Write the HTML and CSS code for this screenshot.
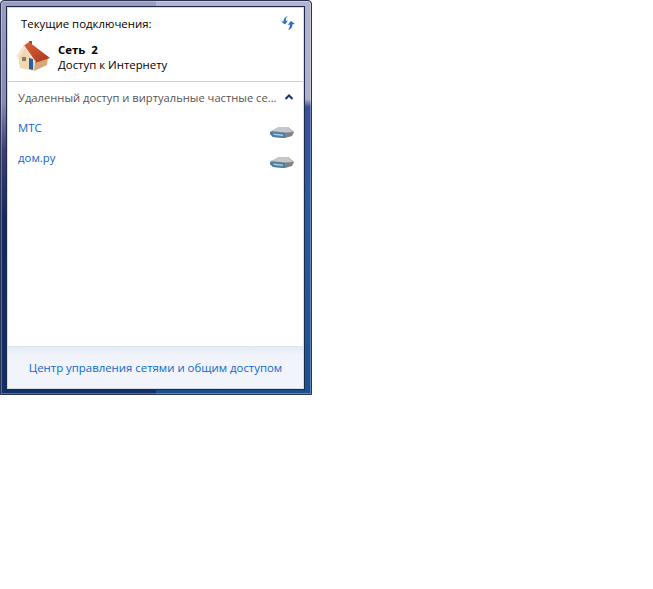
FILE: index.html
```html
<!DOCTYPE html>
<html lang="ru">
<head>
    <meta charset="UTF-8">
    <title>Текущие подключения</title>
    <link rel="stylesheet" href="styles.css">
</head>
<body>
    <div class="flyout">
        <div class="panel">
            <div class="content">
                <section class="current">
                    <div class="current-head">
                        <span>Текущие подключения:</span>
                        <svg class="refresh" width="16" height="16" viewBox="0 0 16 16">
                            <path d="M8 1 C6 2 5.500 4 6 6 L8 5.500 L5 9.500 L1 6.500 L3.500 6.500 C3.500 4 5 1.500 8 1 Z" fill="#2a6fc0"/>
                            <path d="M8 15 C9.500 13.500 10 11 9.800 9.500 L7.500 10 L11 6 L15 9 L12.500 9.300 C12.500 12 11 14.500 8 15 Z" fill="#2a6fc0"/>
                        </svg>
                    </div>
                    <div class="network">
                        <svg class="house" width="36" height="31" viewBox="6 6 36 31">
                            <defs>
                                <linearGradient id="roof" x1="0" y1="0" x2="1" y2="1">
                                    <stop offset="0" stop-color="#dd6238"/>
                                    <stop offset="1" stop-color="#a5371e"/>
                                </linearGradient>
                            </defs>
                            <path d="M16 12 L9 21 L11 33 L25 36 L26 26 Z" fill="#f0d8b0"/>
                            <path d="M26 26 L39 23 L38 30 L25 36 Z" fill="#d4a878"/>
                            <rect x="20" y="6" width="3" height="4" fill="#a05030"/>
                            <path d="M20 7 L41 23 L26 28 L14 11 Z" fill="url(#roof)"/>
                            <path d="M15 10 L7 21 L9 23 L16 14 L25 28 L27 27 Z" fill="#f6e8d0"/>
                            <path d="M20 23 L24 24 L24 35 L20 34 Z" fill="#2a5ca8"/>
                            <rect x="13" y="22" width="4" height="4" fill="#8a7a60"/>
                        </svg>
                        <div class="network-text">
                            <strong>Сеть&nbsp; 2</strong>
                            <span>Доступ к Интернету</span>
                        </div>
                    </div>
                </section>
                <section class="vpn">
                    <div class="vpn-head">
                        <span>Удаленный доступ и виртуальные частные се...</span>
                        <svg class="chevron" width="8" height="6" viewBox="0 0 8 6">
                            <path d="M0.500 5 L4 1.500 L7.500 5" fill="none" stroke="#14356e" stroke-width="2"/>
                        </svg>
                    </div>
                    <div class="vpn-list">
                        <div class="vpn-row">
                            <a class="vpn-link">МТС</a>
                            <svg class="modem" width="24" height="12" viewBox="0 0 24 12">
                                <path d="M0 6 L9 1 L18 1 L24 6 L22 10 L15 12 L3 11 L0 8 Z" fill="#7d8286"/>
                                <path d="M1 5 L9 1 L18 1 L23 6 L15 6.500 Z" fill="#c4c8cc"/>
                                <path d="M0 6 L15 7 L15 12 L3 11 L0 8 Z" fill="#4a7fa4"/>
                                <path d="M3 7.500 L13 8.500 L13 10 L4 9 Z" fill="#a9d0e4"/>
                            </svg>
                        </div>
                        <div class="vpn-row">
                            <a class="vpn-link">дом.ру</a>
                            <svg class="modem" width="24" height="12" viewBox="0 0 24 12">
                                <path d="M0 6 L9 1 L18 1 L24 6 L22 10 L15 12 L3 11 L0 8 Z" fill="#7d8286"/>
                                <path d="M1 5 L9 1 L18 1 L23 6 L15 6.500 Z" fill="#c4c8cc"/>
                                <path d="M0 6 L15 7 L15 12 L3 11 L0 8 Z" fill="#4a7fa4"/>
                                <path d="M3 7.500 L13 8.500 L13 10 L4 9 Z" fill="#a9d0e4"/>
                            </svg>
                        </div>
                    </div>
                </section>
            </div>
            <div class="footer">
                <a class="footer-link">Центр управления сетями и общим доступом</a>
            </div>
        </div>
    </div>
</body>
</html>
```

FILE: styles.css
```css
html, body {
    margin: 0;
    background: #ffffff;
}

body {
    font-family: "Open Sans", "Noto Sans", sans-serif;
    font-size: 11.4px;
    color: #000000;
}

/* Window frame */
.flyout {
    box-sizing: border-box;
    width: 312px;
    height: 395px;
    padding: 6px 7px 5px 6px;
    border: 1px solid #2a3454;
    border-radius: 4px 4px 0 0;
    box-shadow: inset 0 0 0 1px rgba(255, 255, 255, 0.3);
    background-color: #14306a;
    background-image:
        linear-gradient(to bottom, #9c9cbc 0, #8a8ab0 100px, #3c3c74 150px, #12285e 220px, #12306a 100%),
        linear-gradient(to bottom, #b4b4cc 0, #b0b0cc 98px, #3c4f98 106px, #2a5aa0 200px, #1a5090 100%);
    background-size: 50% 100%, 50% 100%;
    background-position: left top, right top;
    background-repeat: no-repeat;
}

.panel {
    box-sizing: border-box;
    display: flex;
    flex-direction: column;
    height: 100%;
    border: 1px solid #d4dcea;
    outline: 1px solid #1c2a4a;
    background: #ffffff;
}

.content {
    flex: 1;
}

/* Current connection */
.current {
    height: 73px;
    border-bottom: 1px solid #cfcfcf;
}

.current-head {
    display: flex;
    justify-content: space-between;
    padding: 7px 7px 0 13px;
    height: 22px;
    line-height: 18px;
}

.network {
    display: flex;
    align-items: center;
    gap: 7px;
    padding: 4px 0 0 7px;
}

.network-text {
    display: flex;
    flex-direction: column;
    line-height: 15px;
}

.network-text strong {
    font-weight: 700;
}

/* VPN list */
.vpn-head {
    display: flex;
    align-items: center;
    justify-content: space-between;
    height: 30px;
    padding: 0 10px 0 10px;
    font-size: 11.2px;
    color: #555555;
}

.vpn-list {
    padding-top: 8px;
}

.vpn-row {
    display: flex;
    justify-content: space-between;
    height: 30px;
    padding: 0 9px 0 10px;
}

.vpn-link {
    color: #0f66cc;
    line-height: 16px;
}

.modem {
    margin-top: 6px;
}

/* Footer */
.footer {
    height: 41px;
    display: flex;
    align-items: center;
    justify-content: center;
    border-top: 1px solid #dde5f0;
    background: linear-gradient(to bottom, #e4ebf5 0, #f1f5fb 8px, #f1f5fb 100%);
}

.footer-link {
    color: #0f66cc;
}
```
